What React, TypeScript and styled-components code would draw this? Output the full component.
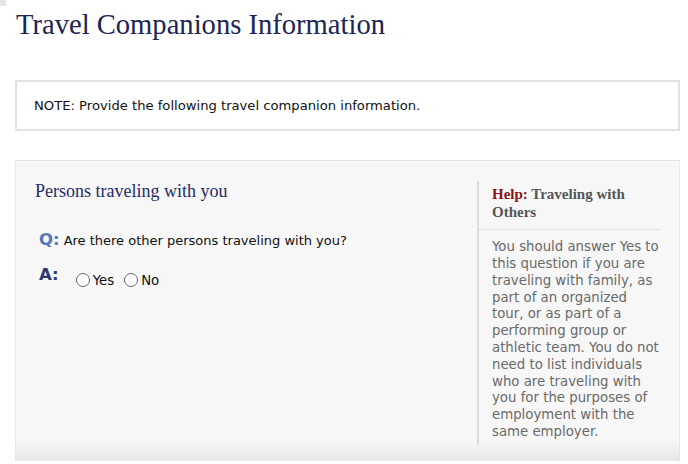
import styled, { createGlobalStyle } from "styled-components";

const GlobalStyle = createGlobalStyle`
    html, body {
        margin: 0;
        padding: 0;
        background: #ffffff;
    }
    body {
        font-family: "DejaVu Sans", Verdana, sans-serif;
    }
`;

const Page = styled.div`
    width: 688px;
    height: 464px;
    overflow: hidden;
    padding: 0 8px 0 15px;
    box-sizing: border-box;
`;

const CornerMark = styled.div`
    position: fixed;
    top: 0;
    left: 0;
    width: 6px;
    height: 6px;
    background: #e6e6e6;
`;

const Title = styled.h1`
    margin: 0;
    padding: 8px 0 0 1px;
    height: 44px;
    font-family: "Liberation Serif", "Times New Roman", serif;
    font-weight: 400;
    font-size: 28.6px;
    line-height: 34px;
    color: #1b2556;
`;

const NoteBox = styled.div`
    margin-top: 28px;
    height: 51px;
    box-sizing: border-box;
    border: 2px solid #e2e2e2;
    padding: 0 17px;
    display: flex;
    align-items: center;
    font-size: 13.15px;
    color: #111;
`;

const Panel = styled.div`
    margin-top: 29px;
    height: 301px;
    box-sizing: border-box;
    border: 1px dotted #e9dcc6;
    background: linear-gradient(to bottom, #f7f7f7 0%, #f7f7f7 93%, #eeeeee 97%, #e8e8e8 100%);
    display: flex;
`;

const Main = styled.div`
    flex: 1;
    padding: 19px 20px 0 19px;
`;

const SectionTitle = styled.h2`
    margin: 0;
    font-family: "Liberation Serif", "Times New Roman", serif;
    font-weight: 400;
    font-size: 18px;
    line-height: 22px;
    color: #1f2d66;
`;

const QARow = styled.div<{ $gap?: number }>`
    display: flex;
    align-items: baseline;
    margin-top: ${({ $gap }) => $gap ?? 0}px;
    padding-left: 4px;
    font-size: 13px;
    color: #111;
`;

const Label = styled.span<{ $color: string }>`
    font-family: "DejaVu Sans", Verdana, sans-serif;
    font-weight: 700;
    font-size: 16.5px;
    color: ${({ $color }) => $color};
    margin-right: 4px;
`;

const Options = styled.div`
    display: flex;
    align-items: center;
    gap: 10px;
    margin-left: 13px;
    position: relative;
    top: 7px;
`;

const Option = styled.label`
    display: flex;
    align-items: center;
    gap: 3px;
    font-size: 13.3px;
    color: #111;
`;

const Radio = styled.span`
    width: 14px;
    height: 14px;
    box-sizing: border-box;
    border-radius: 50%;
    border: 1px solid #666;
    background: #fff;
    display: inline-block;
`;

const Aside = styled.aside`
    width: 169px;
    margin: 20px 18px 15px 0;
    border-left: 2px solid #dcdcdc;
    padding: 5px 0 0 13px;
`;

const HelpTitle = styled.div`
    font-family: "Liberation Serif", "Times New Roman", serif;
    font-weight: 700;
    font-size: 15px;
    line-height: 17.6px;
    color: #555;
    padding-bottom: 8px;
    border-bottom: 1px dotted #cfcfcf;
    margin-left: -13px;
    padding-left: 13px;
`;

const HelpLabel = styled.span`
    color: #8b1414;
`;

const HelpBody = styled.p`
    margin: 9px 0 0;
    font-size: 13.3px;
    line-height: 16.8px;
    color: #6a6a6a;
`;

export default function App() {
  return (
    <>
      <GlobalStyle />
      <CornerMark />
      <Page>
        <Title>Travel Companions Information</Title>
        <NoteBox>NOTE: Provide the following travel companion information.</NoteBox>
        <Panel>
          <Main>
            <SectionTitle>Persons traveling with you</SectionTitle>
            <QARow $gap={28}>
              <Label $color="#5578b8">Q:</Label>
              Are there other persons traveling with you?
            </QARow>
            <QARow $gap={16}>
              <Label $color="#2a3a70">A:</Label>
              <Options>
                <Option><Radio />Yes</Option>
                <Option><Radio />No</Option>
              </Options>
            </QARow>
          </Main>
          <Aside>
            <HelpTitle><HelpLabel>Help:</HelpLabel> Traveling with Others</HelpTitle>
            <HelpBody>
              You should answer Yes to this question if you are traveling with family, as part of an organized tour, or as part of a performing group or athletic team. You do not need to list individuals who are traveling with you for the purposes of employment with the same employer.
            </HelpBody>
          </Aside>
        </Panel>
      </Page>
    </>
  );
}
